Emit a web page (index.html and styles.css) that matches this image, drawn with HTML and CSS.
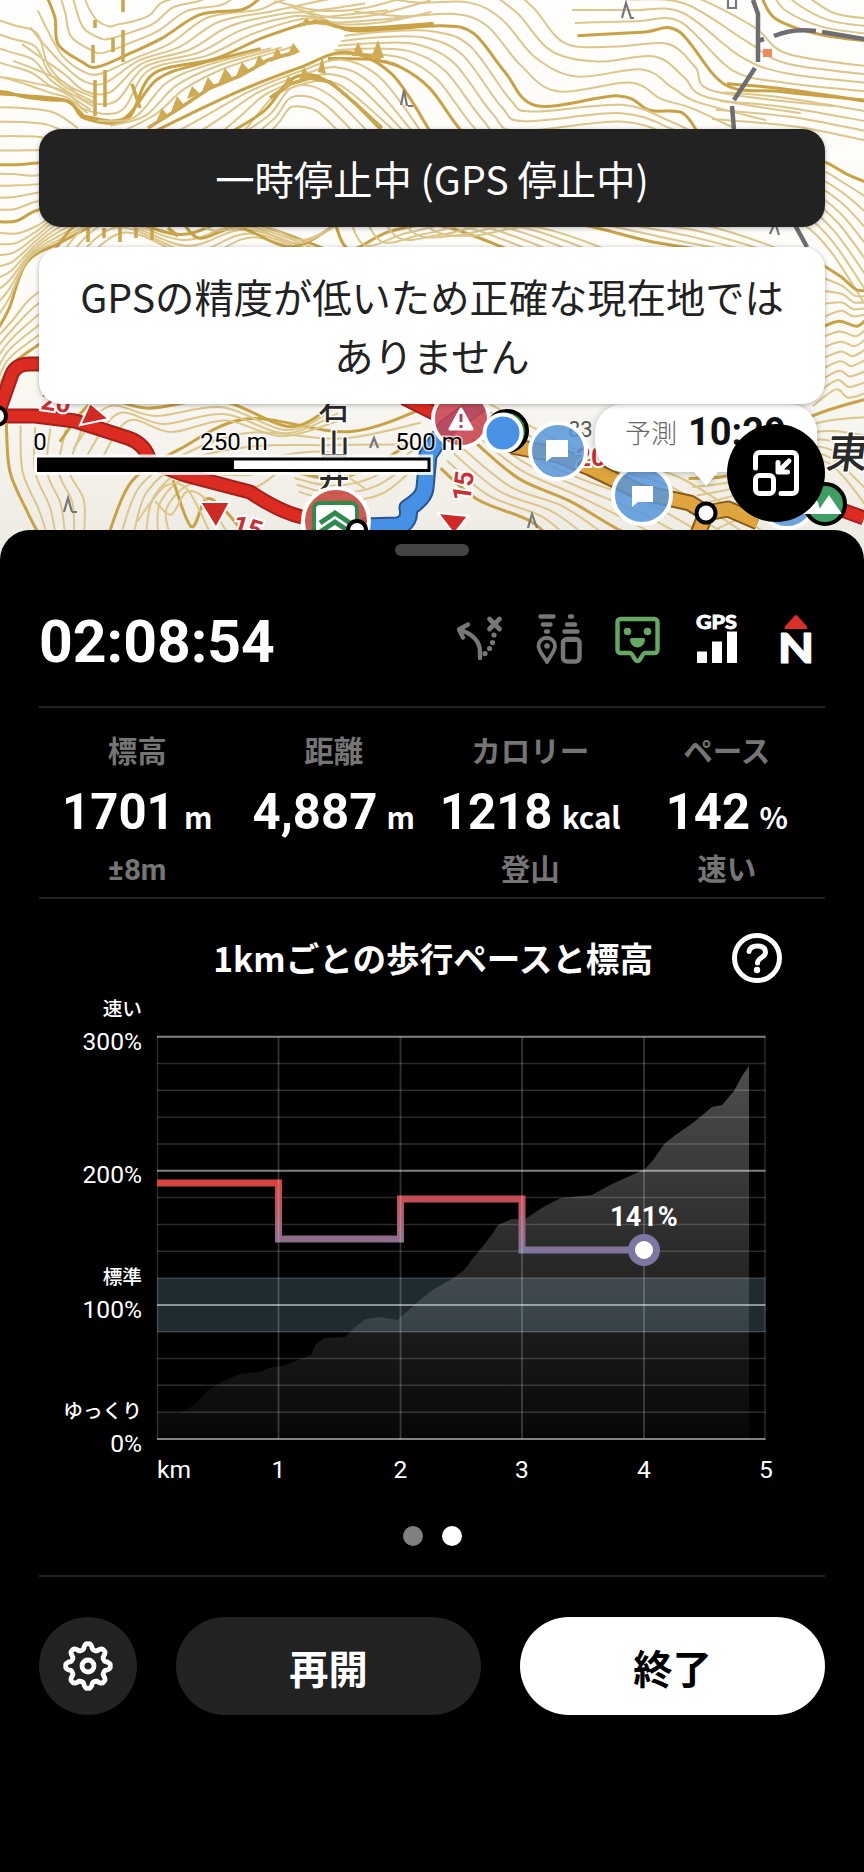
FILE: index.html
```html
<!DOCTYPE html>
<html lang="ja">
<head>
    <meta charset="UTF-8">
    <meta name="viewport" content="width=device-width, initial-scale=1.0">
    <title>活動中</title>
    <link rel="stylesheet" href="styles.css">
</head>
<body>
    <div class="map">
        <svg class="map-canvas" viewBox="0 0 864 570" width="864" height="570">
            <defs>
                <linearGradient id="shade" x1="0" y1="0" x2="0" y2="1">
                    <stop offset="0" stop-color="#fffefc"/>
                    <stop offset="0.6" stop-color="#fdfbf6"/>
                    <stop offset="1" stop-color="#ece9e2"/>
                </linearGradient>
            </defs>
            <rect width="864" height="570" fill="url(#shade)"/>
            <g id="contours"></g>

            <!-- cliffs -->
            <g class="cliff">
                <path d="M93 45v18M113 38v14M123 30v32M105 70v37M95 80v36M132 84l8 24M95 28v-8M123 0v12"/>
                <path d="M148 128l32-20 30-20 30-12 28-16 28-8"/>
                <path d="M270 98l20-14 20-6 20 4 26 22 26 24"/>
                <path d="M300 25q18-6 38 2M345 52l36 6M88 228v14M104 228v10M120 228v14M136 228v10M152 228v12M168 228l10 8"/>
            </g>
            <g class="cliff-teeth">
                <path d="M156 122l6-14 6 8zM171 112l6-16 7 9zM187 99l5-13 8 8zM202 91l6-14 7 9zM218 84l7-16 7 9zM236 76l6-14 7 8zM253 69l6-14 7 9zM270 62l7-14 6 9zM287 57l6-14 7 9zM352 56l6-14 6 13zM371 58l7-18 6 18zM283 88l5-12 8 7zM298 82l6-15 7 11zM318 72l4-16 4 18zM300 26l6-8 8 6zM318 24l8-5 8 7z"/>
            </g>

            <!-- tracks -->
            <g class="track">
                <path d="M753 0l5 14v48M755 68l-21 32M732 106l2 24M758 41l6-2M774 36q18-8 42-5M822 32l42 7"/>
                <path d="M795 225l12 22"/>
            </g>
            <rect x="763" y="49" width="9" height="8" fill="#f08a5c"/>
            <g class="tree">
                <path d="M401 105l3-15 3 16M408 106h5M622 18l4-15 5 15M630 18h4M770 234l5-12 4 13M64 512l4-14 4 14M72 512h5M370 448l4-10 4 10M528 528l4-14 5 14M728 0v8h8v-8"/>
            </g>

            <!-- map labels -->
            <g class="place">
                <text x="334" y="419">石</text>
                <text x="334" y="456">山</text>
                <text x="334" y="487">井</text>
            </g>
            <text class="place-big" x="825" y="468">東</text>
            <text class="place-small" x="568" y="437">83</text>

            <!-- routes -->
            <path class="route-edge red" d="M0 408L12 374Q16 364 30 364L48 364M0 416L35 416L75 421L128 438Q146 444 150 462L185 475L250 492Q280 512 302 517M404 398L436 414M842 510L864 518"/>
            <path class="route red" d="M0 408L12 374Q16 364 30 364L48 364M0 416L35 416L75 421L128 438Q146 444 150 462L185 475L250 492Q280 512 302 517M404 398L436 414M842 510L864 518"/>
            <path class="route-edge blue" d="M362 527L398 526Q411 522 408 508Q424 498 425 488L428 455L446 428L482 402"/>
            <path class="route blue" d="M362 527L398 526Q411 522 408 508Q424 498 425 488L428 455L446 428L482 402"/>
            <path class="route-edge amber" d="M512 446L558 455L590 468L640 492L690 503L706 513L728 509L758 522M706 513L698 534"/>
            <path class="route amber" d="M512 446L558 455L590 468L640 492L690 503L706 513L728 509L758 522M706 513L698 534"/>

            <g class="arrow">
                <path d="M90 403L109 419L80 425Z"/>
                <path d="M200 502L230 502L216 528Z"/>
                <path d="M438 513L468 516L454 534Z"/>
            </g>
            <g class="minutes">
                <text transform="translate(40 409) rotate(8)">20</text>
                <text transform="translate(231 532) rotate(16)">15</text>
                <text transform="translate(470 502) rotate(-82)">15</text>
                <text x="576" y="466">20</text>
            </g>

            <circle class="knot" cx="-3" cy="416" r="9"/>
            <circle cx="336" cy="521" r="33" fill="#c94a42" fill-opacity=".9" stroke="#fff" stroke-width="4"/>
            <rect x="314" y="503" width="43" height="40" rx="6" fill="#fff" stroke="#2f8a4f" stroke-width="4"/>
            <path d="M320 523l15-10 15 10M320 532l15-10 15 10" fill="none" stroke="#2f8a4f" stroke-width="5"/>
            <circle class="knot" cx="357" cy="530" r="9"/>

            <circle cx="461" cy="419" r="28" fill="#c8434e" fill-opacity=".88" stroke="#fff" stroke-width="4"/>
            <path d="M461 409l11 20h-22z" fill="#fff" stroke="#fff" stroke-width="3" stroke-linejoin="round"/>
            <path d="M461 414v8M461 425v3" stroke="#a04a5a" stroke-width="3"/>
            <circle cx="507" cy="431" r="20" fill="#2f8a4f" stroke="#000" stroke-width="4"/>
            <circle cx="503" cy="433" r="18.500" fill="#4a92e6" stroke="#fff" stroke-width="4"/>

            <g class="note">
                <circle cx="558" cy="451" r="28"/>
                <circle cx="642" cy="495" r="29"/>
                <circle cx="787" cy="500" r="28"/>
            </g>
            <path d="M546 440h22v17h-16l-6 5zM632 486h21v16h-15l-6 5z" fill="#fff"/>
            <circle class="knot" cx="706" cy="513" r="9.500"/>
            <circle cx="825" cy="504" r="20" fill="#3f9e64" stroke="#000" stroke-width="4"/>
            <path d="M803 514l10-17 5 5 3 12zM816 514l13-19 13 19z" fill="#fff"/>

            <!-- forecast bubble -->
            <path class="bubble" d="M623 404h166a28 28 0 0 1 28 28v12a28 28 0 0 1-28 28h-71l-12 14-12-14h-71a28 28 0 0 1-28-28v-12a28 28 0 0 1 28-28z"/>
            <text class="bubble-label" x="625" y="443">予測</text>
            <text class="bubble-time" x="688" y="445">10:29</text>

            <!-- scale bar -->
            <g class="scale">
                <rect x="34" y="454.500" width="399" height="20.500" fill="#fff" fill-opacity=".85"/>
                <rect x="38.500" y="459" width="390.500" height="11.500" fill="#fff" stroke="#000" stroke-width="3"/>
                <rect x="37" y="458" width="197" height="14" fill="#000"/>
                <text x="40" y="450" text-anchor="middle">0</text>
                <text x="234" y="450" text-anchor="middle">250 m</text>
                <text x="429" y="450" text-anchor="middle">500 m</text>
            </g>
        </svg>

        <div class="banner banner-dark">一時停止中 (GPS 停止中)</div>
        <div class="banner banner-light">GPSの精度が低いため正確な現在地ではありません</div>

        <button class="fab" aria-label="縮小">
            <svg viewBox="0 0 46 46" width="46" height="46">
                <path d="M2.500 18V6.500a4 4 0 0 1 4-4h33a4 4 0 0 1 4 4v33a4 4 0 0 1-4 4H28"/>
                <rect x="2.500" y="25.500" width="18" height="18" rx="4"/>
                <path d="M36 11L25.500 21.500M25 12.500v9.500h9.500"/>
            </svg>
        </button>
    </div>

    <div class="sheet">
        <div class="handle"></div>

        <div class="top-row">
            <div class="time">02:08:54</div>
            <div class="status">
                <svg class="gray" viewBox="0 0 59 59">
                    <path d="M30 49V43C30 31 20 24 9.500 20.500M18 15.500L9 20.500l4 8" />
                    <path d="M39.500 10l10 10M49.500 10l-10 10" stroke-width="4.800"/>
                    <g class="fill"><circle cx="44" cy="26" r="2.600"/><circle cx="42.500" cy="33.500" r="2.600"/><circle cx="39.500" cy="39.500" r="2.600"/><circle cx="35" cy="44.500" r="2.600"/></g>
                </svg>
                <svg class="gray" viewBox="0 0 59 59">
                    <path d="M11.500 7.500h13M14 15.500h7.500M17 22.500h2M41 7.500h2M38 15.500h8M35.500 22.500h13"/>
                    <path d="M18 53C14 46 9.500 42 9.500 37a8.200 8.200 0 0 1 16.500 0C26 42 22 46 18 53z" stroke-width="3.800"/>
                    <circle class="fill" cx="18" cy="37" r="2.800"/>
                    <rect x="34" y="30" width="16.500" height="22.500" rx="4"/>
                    <path d="M38 30.500h8.500" stroke-width="5"/>
                </svg>
                <svg class="green" viewBox="0 0 59 59">
                    <path d="M12.500 10h34a3 3 0 0 1 3 3v28a3 3 0 0 1-3 3h-10c-3 1-3.500 8-7 8s-4-7-7-8h-10a3 3 0 0 1-3-3v-28a3 3 0 0 1 3-3z"/>
                    <circle class="fill" cx="19.500" cy="22.500" r="3.800"/>
                    <circle class="fill" cx="39.500" cy="22.500" r="3.800"/>
                    <path class="fill" d="M22 30.500q0-1.500 1.500-1.500h12q1.500 0 1.500 1.500c0 4-3 8-7.500 8s-7.500-4-7.500-8z"/>
                </svg>
                <svg viewBox="0 0 59 59">
                    <text class="gps" x="9" y="19.500" textLength="41" lengthAdjust="spacingAndGlyphs">GPS</text>
                    <path d="M10 42.500h10V54H10zM25 32.500h10V54H25zM40 22.500h10V54H40z" fill="#fff"/>
                </svg>
                <svg viewBox="0 0 59 59">
                    <path d="M30 7.500l10 11H20z" fill="#d9302a" stroke="#d9302a" stroke-width="3" stroke-linejoin="round"/>
                    <text class="north" x="12" y="53.500" textLength="36" lengthAdjust="spacingAndGlyphs">N</text>
                </svg>
            </div>
        </div>

        <div class="stats">
            <div class="stat">
                <div class="label">標高</div>
                <div class="value">1701 <span>m</span></div>
                <div class="label">±8m</div>
            </div>
            <div class="stat">
                <div class="label">距離</div>
                <div class="value">4,887 <span>m</span></div>
            </div>
            <div class="stat">
                <div class="label">カロリー</div>
                <div class="value">1218 <span>kcal</span></div>
                <div class="label">登山</div>
            </div>
            <div class="stat">
                <div class="label">ペース</div>
                <div class="value">142 <span>%</span></div>
                <div class="label">速い</div>
            </div>
        </div>

        <div class="chart-head">
            <h2>1kmごとの歩行ペースと標高</h2>
            <svg class="help" viewBox="0 0 50 50" width="50" height="50">
                <circle cx="25" cy="25" r="22.500"/>
                <path d="M17 18.500C18 14.500 21 13 25 13c5 0 8.500 2 8.500 6.500 0 5-8 5-8 10.500"/>
                <circle class="dot" cx="25" cy="37" r="3.200"/>
            </svg>
        </div>

        <svg class="chart" viewBox="0 990 864 500" width="864" height="500">
            <defs>
                <linearGradient id="elev" gradientUnits="userSpaceOnUse" x1="0" y1="1060" x2="0" y2="1440">
                    <stop offset="0" stop-color="#fff" stop-opacity=".31"/>
                    <stop offset="1" stop-color="#fff" stop-opacity=".025"/>
                </linearGradient>
                <linearGradient id="pace" gradientUnits="userSpaceOnUse" x1="0" y1="1183" x2="0" y2="1254">
                    <stop offset="0" stop-color="#d8423f"/>
                    <stop offset="1" stop-color="#7b78a0"/>
                </linearGradient>
            </defs>
            <rect x="157" y="1278" width="608.500" height="54" fill="#1f2b31"/>
            <path fill="url(#elev)" d="M157 1413L180 1413 194 1405 208 1390 222 1382 240 1374 260 1372 272 1367 283 1366 298 1360 311 1355 316 1344 324 1338 345 1337 354 1328 366 1319 380 1317 398 1320 404 1314 420 1300 434 1289 452 1279 464 1270 478 1252 491 1236 498 1225 512 1219 525 1219 545 1206 561 1198 592 1195 612 1184 630 1176 645 1169 653 1160 665 1143 677 1134 694 1122 712 1107 722 1105 734 1091 742 1076 749 1066V1440H157z"/>
            <g id="grid"></g>
            <path class="pace-line" d="M157 1183H278.500V1239H400.500V1199H522V1250H644"/>
            <g class="vlines"><path d="M278.500 1037v402M400.500 1037v402M522 1037v402M644 1037v402"/></g>
            <circle cx="644" cy="1250" r="16" fill="#7d78a2"/>
            <circle cx="644" cy="1250" r="9" fill="#fff"/>
            <text class="pace-value" x="644" y="1226">141%</text>
            <g class="axis-y">
                <text x="142" y="1049.500">300%</text>
                <text x="142" y="1183">200%</text>
                <text x="142" y="1317.500">100%</text>
                <text x="142" y="1452">0%</text>
            </g>
            <g class="axis-name">
                <text x="142" y="1016">速い</text>
                <text x="142" y="1284">標準</text>
                <text x="142" y="1418">ゆっくり</text>
            </g>
            <g class="axis-x">
                <text x="157" y="1478" class="start">km</text>
                <text x="278.500" y="1478">1</text>
                <text x="400.500" y="1478">2</text>
                <text x="522" y="1478">3</text>
                <text x="644" y="1478">4</text>
                <text x="766" y="1478">5</text>
            </g>
        </svg>

        <div class="pager">
            <span></span>
            <span class="active"></span>
        </div>

        <div class="actions">
            <button class="btn-round" aria-label="設定">
                <svg id="gear" viewBox="-25 -25 50 50" width="50" height="50">
                    <path id="gear-path"/>
                    <circle r="6"/>
                </svg>
            </button>
            <button class="btn btn-dark">再開</button>
            <button class="btn btn-light">終了</button>
        </div>
    </div>

    <script src="script.js"></script>
</body>
</html>
```

FILE: styles.css
```css
* {
    box-sizing: border-box;
}
body {
    margin: 0;
    width: 864px;
    height: 1872px;
    overflow: hidden;
    background-color: #000;
    color: #fff;
    font-family: Roboto, 'Noto Sans CJK JP', sans-serif;
}
button {
    border: none;
    padding: 0;
    font-family: 'Noto Sans CJK JP', sans-serif;
    cursor: pointer;
}

/* map */
.map {
    position: relative;
    height: 530px;
    padding: 129px 39px 0;
}
.map-canvas {
    position: absolute;
    top: 0;
    left: 0;
}
.contour {
    fill: none;
    stroke: #dcc68a;
    stroke-width: 2;
}
.contour.index {
    stroke: #c9a245;
    stroke-width: 3;
}
.cliff {
    fill: none;
    stroke: #cba850;
    stroke-width: 3.6;
}
.cliff-teeth {
    fill: #cfac54;
}
.track {
    fill: none;
    stroke: #6d6d72;
    stroke-width: 4.5;
}
.tree {
    fill: none;
    stroke: #77777c;
    stroke-width: 2.2;
}
.place text,
.place-big {
    font-family: 'Noto Sans CJK JP', sans-serif;
    fill: #2c2a28;
    stroke: #fff;
    stroke-width: 3;
    paint-order: stroke;
}
.place text {
    font-size: 31px;
    font-weight: 500;
    text-anchor: middle;
}
.place-big {
    font-size: 42px;
    font-weight: 500;
    transform: skewX(-8deg);
    transform-origin: 840px 468px;
}
.place-small {
    font-size: 22px;
    fill: #555;
}
.route-edge,
.route {
    fill: none;
    stroke-linejoin: round;
}
.route-edge {
    stroke-width: 15;
}
.route {
    stroke-width: 11;
}
.route-edge.red { stroke: #a3201c; }
.route.red { stroke: #dc2c22; }
.route-edge.blue { stroke: #27568f; stroke-width: 19; }
.route.blue { stroke: #4690e6; stroke-width: 15; }
.route-edge.amber { stroke: #8a5a16; stroke-width: 17; }
.route.amber { stroke: #dea53e; stroke-width: 13; }
.arrow {
    fill: #cf2a26;
    stroke: #fff;
    stroke-width: 2;
}
.minutes {
    font-size: 26px;
    font-weight: 700;
    fill: #cb2f32;
    stroke: #fff;
    stroke-width: 4;
    paint-order: stroke;
}
.knot {
    fill: #fff;
    stroke: #000;
    stroke-width: 4;
}
.note {
    fill: #5796dc;
    fill-opacity: 0.85;
    stroke: #fff;
    stroke-width: 4;
}
.bubble {
    fill: #fff;
    filter: drop-shadow(0 1px 3px rgba(0, 0, 0, 0.25));
}
.bubble-label {
    font-size: 26px;
    font-family: 'Noto Sans CJK JP', sans-serif;
    font-weight: 300;
    fill: #666;
}
.bubble-time {
    font-size: 38px;
    font-weight: 700;
    fill: #111;
}
.scale text {
    font-size: 24px;
    fill: #000;
    stroke: #fff;
    stroke-opacity: 0.7;
    stroke-width: 3;
    paint-order: stroke;
}

.banner {
    position: relative;
    border-radius: 22px;
    font-family: 'Noto Sans CJK JP', sans-serif;
    font-size: 39.3px;
    line-height: 59px;
    text-align: center;
    box-shadow: 0 1px 5px rgba(0, 0, 0, 0.3);
}
.banner-dark {
    padding: 18.5px 0 20.5px;
    background-color: #222;
}
.banner-light {
    margin-top: 20px;
    padding: 18.5px 35px 20.5px;
    background-color: #fff;
    color: #222;
}
.fab {
    position: absolute;
    top: 424px;
    left: 727px;
    width: 98px;
    height: 98px;
    border-radius: 50%;
    background-color: #000;
    display: flex;
    align-items: center;
    justify-content: center;
}
.fab svg {
    fill: none;
    stroke: #fff;
    stroke-width: 5;
    stroke-linecap: round;
    stroke-linejoin: round;
}

/* bottom sheet */
.sheet {
    position: relative;
    padding: 14px 39px 0;
    border-radius: 30px 30px 0 0;
    background-color: #000;
}
.handle {
    width: 74px;
    height: 12px;
    margin: 0 auto;
    border-radius: 6px;
    background-color: #444;
}
.top-row {
    display: flex;
    justify-content: space-between;
    align-items: center;
    height: 150px;
    padding-top: 14px;
}
.time {
    padding-top: 8px;
    font-size: 58.9px;
    font-weight: 700;
    line-height: 70px;
}
.status {
    display: flex;
    gap: 20px;
}
.status svg {
    width: 59px;
    height: 59px;
    fill: none;
    stroke-width: 4.4;
    stroke-linecap: round;
    stroke-linejoin: round;
}
.status .gray { stroke: #777; }
.status .gray .fill { fill: #777; stroke: none; }
.status .green { stroke: #64a863; }
.status .green .fill { fill: #64a863; stroke: none; }
.gps,
.north {
    font-family: Lato, sans-serif;
    font-weight: 900;
    fill: #fff;
    stroke: #fff;
}
.gps { font-size: 19px; stroke-width: 0.8; }
.north { font-size: 41px; stroke-width: 1.2; }

.stats {
    display: grid;
    grid-template-columns: repeat(4, 1fr);
    height: 193px;
    padding-top: 23px;
    border-top: 2px solid #222;
    border-bottom: 2px solid #222;
    text-align: center;
    white-space: nowrap;
}
.label {
    font-size: 29.5px;
    font-weight: 700;
    line-height: 42px;
    color: #757575;
}
.value {
    height: 76px;
    font-size: 49.1px;
    font-weight: 700;
    line-height: 78px;
}
.value span {
    margin-left: -3px;
    font-family: 'Noto Sans CJK JP', sans-serif;
    font-size: 29.5px;
    font-weight: 700;
    line-height: 1;
}

.chart-head {
    display: flex;
    align-items: center;
    justify-content: flex-end;
    height: 91px;
    padding: 29px 43px 2px 0;
}
.chart-head h2 {
    margin: 0 79px 0 0;
    font-family: 'Noto Sans CJK JP', sans-serif;
    font-size: 33.6px;
    font-weight: 700;
    line-height: 50px;
}
.help {
    fill: none;
    stroke: #fff;
    stroke-width: 5;
    stroke-linecap: round;
}
.help .dot {
    fill: #fff;
    stroke: none;
}

.chart {
    display: block;
    margin-left: -39px;
}
.chart text {
    fill: #fff;
}
.grid-minor { stroke: #fff; stroke-opacity: 0.17; stroke-width: 1.5; }
.grid-major { stroke: #fff; stroke-opacity: 0.5; stroke-width: 2; }
.vlines { stroke: #fff; stroke-opacity: 0.2; stroke-width: 1.8; }
.pace-line {
    fill: none;
    stroke: url(#pace);
    stroke-width: 7;
}
.pace-value {
    font-size: 27px;
    font-weight: 700;
    letter-spacing: 0.4px;
    text-anchor: middle;
}
.axis-y {
    font-size: 24.6px;
    text-anchor: end;
}
.axis-name {
    font-family: 'Noto Sans CJK JP', sans-serif;
    font-size: 19.7px;
    font-weight: 500;
    text-anchor: end;
}
.axis-x {
    font-size: 24.6px;
    text-anchor: middle;
}
.axis-x .start {
    text-anchor: start;
}

.pager {
    display: flex;
    justify-content: center;
    gap: 19px;
    height: 87px;
    padding-top: 36px;
    border-bottom: 2px solid #222;
}
.pager span {
    width: 20px;
    height: 20px;
    border-radius: 50%;
    background-color: #808080;
}
.pager .active {
    background-color: #fff;
}

.actions {
    display: grid;
    grid-template-columns: 98px 1fr 1fr;
    gap: 39px;
    padding-top: 40px;
}
.actions button {
    height: 98px;
    border-radius: 49px;
}
.btn {
    font-size: 39.3px;
    font-weight: 700;
}
.btn-round,
.btn-dark {
    background-color: #222;
    color: #fff;
}
.btn-round {
    display: flex;
    align-items: center;
    justify-content: center;
}
.btn-round svg {
    fill: none;
    stroke: #fff;
    stroke-width: 4.8;
    stroke-linejoin: round;
}
.btn-light {
    background-color: #fff;
    color: #000;
}
```

FILE: script.js
```javascript
const NS = 'http://www.w3.org/2000/svg';

function add(parent, name, attrs) {
    const el = document.createElementNS(NS, name);
    for (const key in attrs) {
        el.setAttribute(key, attrs[key]);
    }
    parent.appendChild(el);
}

// smooth curve through the points
function curve(p) {
    let d = `M${p[0][0]} ${p[0][1]}`;
    for (let i = 0; i < p.length - 1; i++) {
        const a = p[i - 1] || p[i], b = p[i], c = p[i + 1], e = p[i + 2] || c;
        d += `C${b[0] + (c[0] - a[0]) / 6} ${b[1] + (c[1] - a[1]) / 6} ${c[0] - (e[0] - b[0]) / 6} ${c[1] - (e[1] - b[1]) / 6} ${c[0]} ${c[1]}`;
    }
    return d;
}

// pairs of index contours, the lines between them are interpolated
const slopes = [
    [[[-5, 92], [25, 96], [70, 103], [85, 118], [125, 118], [155, 75], [215, 60], [262, 36], [320, 20], [350, 30], [432, 24]],
     [[45, -5], [55, 20], [60, 45], [80, 60], [97, 67], [130, 56], [160, 38], [200, 13], [245, 10], [262, -4], [300, -20]], 6],
    [[[45, -5], [55, 20], [60, 45], [80, 60], [97, 67], [130, 56], [160, 38], [200, 13], [245, 10], [262, -4]],
     [[95, -10], [100, 0], [108, 10], [118, 14], [125, 13], [135, 10], [145, 5], [150, 0], [155, -5], [160, -10]], 4],
    [[[-5, 92], [10, 94], [25, 96], [50, 99], [70, 103], [85, 118]],
     [[-5, 5], [15, 10], [38, 20], [50, 60], [66, 82], [97, 92]], 6],
    [[[320, 20], [350, 30], [385, 28], [432, 24]], [[262, -4], [310, 2], [360, 0], [432, -20]], 4],
    [[[345, 30], [385, 28], [440, 25], [475, 35], [505, 72], [535, 104], [620, 96], [650, 112], [680, 112], [700, 132]],
     [[400, -60], [460, -40], [510, -30], [547, 0], [578, 34], [640, 32], [680, 33], [704, 55], [725, 84], [870, 101]], 5],
    [[[330, 58], [370, 58], [400, 68], [432, 90], [462, 132], [500, 160], [620, 150], [680, 160], [720, 165]],
     [[345, 30], [385, 28], [440, 25], [475, 35], [520, 92], [540, 104], [620, 96], [670, 112], [700, 132]], 6],
    [[[578, 34], [640, 32], [680, 33], [725, 84], [780, 90], [870, 101]],
     [[560, -30], [620, -20], [690, -15], [758, 10], [790, 45], [870, 60]], 5],
    [[[760, -5], [775, 20], [820, 35], [870, 40]], [[800, -20], [820, -10], [840, 5], [870, 10]], 4],
    [[[725, 84], [780, 90], [870, 101]], [[710, 130], [800, 135], [870, 150]], 5],
    [[[760, 150], [820, 160], [845, 172], [870, 184]], [[740, 200], [790, 225], [830, 262], [870, 330]], 9],
    [[[820, 330], [840, 320], [855, 325], [870, 318]], [[810, 415], [835, 400], [850, 410], [870, 400]], 8],
    [[[820, 262], [840, 275], [855, 290], [870, 292]], [[820, 330], [840, 320], [855, 325], [870, 318]], 5],
    [[[-5, 163], [15, 164], [35, 165], [60, 160]], [[-5, 92], [25, 96], [60, 100], [80, 118]], 5],
    [[[-5, 220], [15, 222], [38, 212], [60, 205]], [[-5, 163], [15, 164], [35, 165], [60, 160]], 5],
    [[[-5, 330], [10, 310], [28, 262], [60, 240], [95, 225]], [[-5, 220], [15, 222], [38, 222], [60, 212], [95, 205]], 9],
    [[[-5, 400], [10, 370], [35, 345], [60, 330]], [[-5, 330], [10, 310], [28, 290], [60, 270]], 6],
    [[[85, 118], [125, 118], [155, 78], [200, 65], [262, 50]], [[140, 135], [165, 110], [195, 92], [240, 70], [300, 45]], 4],
    [[[150, 135], [190, 112], [240, 90], [300, 70], [345, 52], [390, 72], [432, 132]],
     [[262, 135], [270, 118], [285, 100], [300, 88], [318, 86], [340, 96], [384, 132]], 5],
    [[[225, 135], [262, 110], [290, 82], [315, 76], [340, 90], [384, 132]],
     [[278, 135], [285, 126], [293, 118], [300, 116], [310, 118], [325, 132]], 4],
    [[[40, 270], [90, 215], [180, 236], [240, 220], [330, 250]], [[60, 300], [130, 240], [200, 262], [260, 240], [350, 280]], 5],
    [[[180, 220], [200, 240], [240, 228], [290, 245], [340, 222]], [[200, 210], [240, 216], [280, 225], [310, 235], [360, 215]], 3],
    [[[330, 210], [350, 250], [390, 230], [440, 225], [520, 255]], [[420, 200], [450, 225], [490, 236], [560, 230], [640, 255]], 6],
    [[[560, 222], [600, 228], [650, 240], [700, 250]], [[600, 190], [660, 212], [730, 225], [800, 250]], 5],
    [[[8, 425], [10, 470], [25, 510], [40, 535]], [[95, 430], [80, 470], [98, 500], [92, 535]], 6],
    [[[110, 535], [130, 480], [180, 450], [250, 420], [350, 430], [440, 400]],
     [[180, 535], [175, 515], [200, 490], [250, 500], [290, 470], [330, 535]], 6],
    [[[60, 440], [95, 400], [150, 410], [220, 400], [290, 425], [340, 400]],
     [[110, 470], [140, 430], [180, 440], [225, 425], [280, 440], [340, 430]], 4],
    [[[290, 470], [330, 480], [370, 470], [410, 440]], [[300, 500], [340, 510], [385, 500], [420, 470]], 4],
    [[[470, 440], [520, 480], [570, 500], [620, 530], [680, 560]], [[480, 390], [540, 420], [600, 450], [690, 470], [780, 530]], 7],
    [[[440, 470], [480, 500], [530, 520], [560, 550]], [[470, 440], [520, 480], [570, 500], [620, 530]], 4],
    [[[690, 480], [740, 470], [800, 420], [870, 400]], [[720, 535], [790, 500], [830, 470], [870, 530]], 7],
    [[[175, 480], [190, 525], [205, 500], [225, 510], [245, 535]], [[120, 540], [128, 490], [150, 480], [170, 480], [190, 530]], 3]
];

const contours = document.getElementById('contours');
slopes.forEach(([from, to, steps], s) => {
    for (let k = 0; k < steps; k++) {
        const t = k / steps;
        const pts = from.map((p, i) => [
            p[0] + (to[i][0] - p[0]) * t + Math.sin(i * 2.1 + s + k * 0.5) * 2,
            p[1] + (to[i][1] - p[1]) * t + Math.cos(i * 1.7 + s + k * 0.4) * 1.8
        ]);
        add(contours, 'path', { d: curve(pts), class: k === 0 ? 'contour index' : 'contour' });
    }
});

// chart grid, one line per 20%
const grid = document.getElementById('grid');
for (let i = 0; i <= 15; i++) {
    const y = 1439 - i * 26.82;
    add(grid, 'line', { x1: 157, x2: 765.5, y1: y, y2: y, class: i % 5 === 0 ? 'grid-major' : 'grid-minor' });
}
[157.5, 765].forEach(x => add(grid, 'line', { x1: x, x2: x, y1: 1037, y2: 1439, class: 'grid-minor' }));

// gear outline with eight teeth
const gear = [];
for (let a = 0; a <= 360; a += 5) {
    const wave = Math.cos(a * 8 * Math.PI / 180);
    const r = 19.6 + 2.9 * Math.max(-0.9, Math.min(0.9, wave * 1.5));
    gear.push([r * Math.sin(a * Math.PI / 180), -r * Math.cos(a * Math.PI / 180)]);
}
document.getElementById('gear-path').setAttribute('d', curve(gear) + 'Z');
```
